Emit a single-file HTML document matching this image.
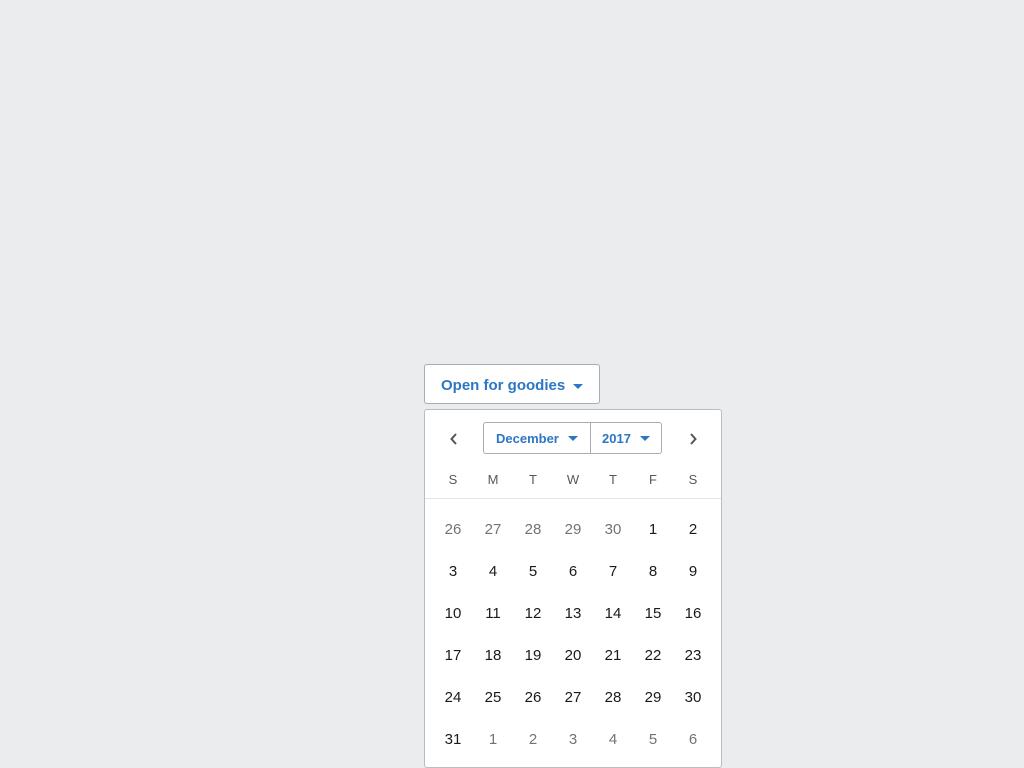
<!DOCTYPE html>
<html><head><style>
body{margin:0;width:1024px;height:768px;background:#ebecee;font-family:"Liberation Sans",Arial,sans-serif;position:relative;overflow:hidden}
.btn{position:absolute;left:424px;top:364px;width:174px;height:38px;border:1px solid #a9acb2;border-radius:3px;background:#fff;color:#2b77c4;font-weight:bold;font-size:15px;line-height:38px;box-sizing:content-box}
.btn span{position:absolute;left:16px;top:2px}
.tri{position:absolute;width:0;height:0;border-left:5px solid transparent;border-right:5px solid transparent;border-top:5px solid #2b77c4}
.pop{position:absolute;left:424px;top:409px;width:296px;height:357px;border:1px solid #b9bcc2;border-radius:3px;background:#fff}
.sel{position:absolute;top:12px;height:30px;border:1px solid #a9acb2;color:#2b77c4;font-weight:bold;font-size:13px;line-height:32px}
.c{position:absolute;width:40px;text-align:center;font-size:15px;color:#1a1a1a}
.g{color:#70737a}
.w{position:absolute;width:40px;text-align:center;font-size:13px;color:#55585e}
</style></head><body>
<div class="btn"><span>Open for goodies</span><div class="tri" style="left:148px;top:19px"></div></div>
<div class="pop">
<svg style="position:absolute;left:24px;top:22px" width="10" height="14"><path d="M7 2L2.5 7L7 12" fill="none" stroke="#555" stroke-width="2"/></svg>
<svg style="position:absolute;left:263px;top:22px" width="10" height="14"><path d="M3 2L7.5 7L3 12" fill="none" stroke="#555" stroke-width="2"/></svg>
<div class="sel" style="left:58px;width:106px;border-radius:3px 0 0 3px"><span style="position:absolute;left:12px">December</span><div class="tri" style="left:84px;top:13px"></div></div>
<div class="sel" style="left:165px;width:71px;border-left:none;border-radius:0 3px 3px 0"><span style="position:absolute;left:12px">2017</span><div class="tri" style="left:50px;top:13px"></div></div>
<div style="position:absolute;left:0;right:0;top:88px;height:1px;background:#e3e4e7"></div>
<div id="g"></div>
</div>
<script>
var p=document.querySelector('.pop'),h='';
'SMTWTFS'.split('').forEach(function(d,i){h+='<div class="w" style="left:'+(8+i*40)+'px;top:62px">'+d+'</div>';});
var days=[26,27,28,29,30];for(var i=1;i<=31;i++)days.push(i);for(i=1;i<=6;i++)days.push(i);
days.forEach(function(d,k){var r=Math.floor(k/7),c=k%7,gr=(k<5||k>35);
h+='<div class="c'+(gr?' g':'')+'" style="left:'+(8+c*40)+'px;top:'+(111+r*42)+'px">'+d+'</div>';});
document.getElementById('g').innerHTML=h;
</script>
</body></html>
